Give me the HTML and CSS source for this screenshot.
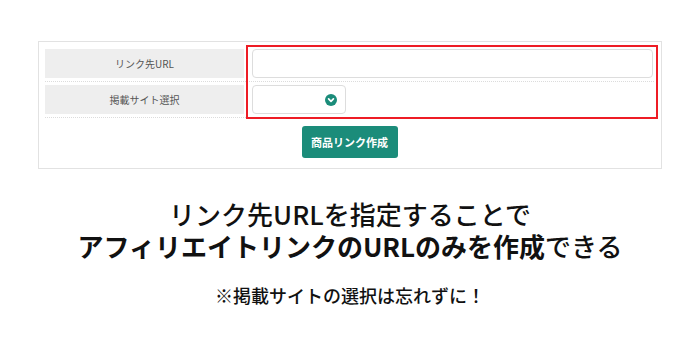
FILE: index.html
```html
<!DOCTYPE html>
<html lang="ja">
<head>
  <meta charset="UTF-8">
  <title>商品リンク作成</title>
  <link rel="stylesheet" href="styles.css">
</head>
<body>
  <div class="form-box">
    <div class="form-rows">
      <div class="form-row">
        <div class="form-label">リンク先URL</div>
        <div class="form-field">
          <input class="text-input" type="text">
        </div>
      </div>
      <div class="form-row">
        <div class="form-label">掲載サイト選択</div>
        <div class="form-field">
          <div class="select-box">
            <svg class="select-icon" width="12" height="12" viewBox="0 0 12 12">
              <circle cx="6" cy="6" r="6" fill="#1b8c7a"/>
              <path d="M3.6 4.9 L6 7.3 L8.4 4.9" fill="none" stroke="#fff" stroke-width="1.7" stroke-linecap="round" stroke-linejoin="round"/>
            </svg>
          </div>
        </div>
      </div>
      <!-- annotation frame -->
      <div class="highlight"></div>
    </div>
    <div class="button-row">
      <button class="make-button">商品リンク作成</button>
    </div>
  </div>

  <div class="caption">
    <p class="caption-main">リンク先URLを指定することで</p>
    <p class="caption-main"><b>アフィリエイトリンクのURLのみを作成</b>できる</p>
    <p class="caption-note">※掲載サイトの選択は忘れずに！</p>
  </div>
</body>
</html>
```

FILE: styles.css
```css
body {
  margin: 0;
  background-color: #ffffff;
  font-family: "Noto Sans CJK JP", "Noto Sans", sans-serif;
  color: #111111;
}
.form-box {
  width: 624px;
  margin: 41px auto 0;
  border: 1px solid #e2e2e2;
  box-sizing: border-box;
  padding: 7px 7px 10px 6px;
}
.form-rows {
  position: relative;
}
.form-row {
  display: flex;
  gap: 8px;
  padding-bottom: 3px;
  margin-bottom: 3px;
  border-bottom: 1px dotted #dcdcdc;
}
.form-label {
  width: 199px;
  height: 29px;
  background-color: #eeeeee;
  color: #555555;
  font-size: 10px;
  display: flex;
  align-items: center;
  justify-content: center;
}
.form-field {
  flex: 1;
  display: flex;
}
.text-input {
  flex: 1;
  height: 29px;
  margin: 0 1px 0 0;
  box-sizing: border-box;
  border: 1px solid #dddddd;
  border-radius: 4px;
  background-color: #ffffff;
}
.select-box {
  width: 94px;
  height: 29px;
  box-sizing: border-box;
  border: 1px solid #dddddd;
  border-radius: 4px;
  display: flex;
  align-items: center;
  justify-content: flex-end;
  padding-right: 8px;
}
.highlight {
  position: absolute;
  left: 201px;
  top: -4px;
  width: 412px;
  height: 74px;
  border: 2px solid #ee1c25;
  box-sizing: border-box;
  pointer-events: none;
}
.button-row {
  display: flex;
  justify-content: center;
  padding-top: 5px;
}
.make-button {
  width: 96px;
  height: 32px;
  border: none;
  border-radius: 3px;
  background-color: #1b8c7a;
  color: #ffffff;
  font-family: "Noto Sans CJK JP", sans-serif;
  font-size: 11px;
  font-weight: bold;
  padding: 0;
}
.caption {
  text-align: center;
  margin-top: 29px;
}
.caption p {
  margin: 0;
}
.caption-main {
  font-size: 26px;
  line-height: 32px;
  font-weight: 500;
}
.caption-main b {
  font-weight: bold;
}
.caption .caption-note {
  margin-top: 20px;
  font-size: 18px;
  line-height: 26px;
  font-weight: 500;
}
```
